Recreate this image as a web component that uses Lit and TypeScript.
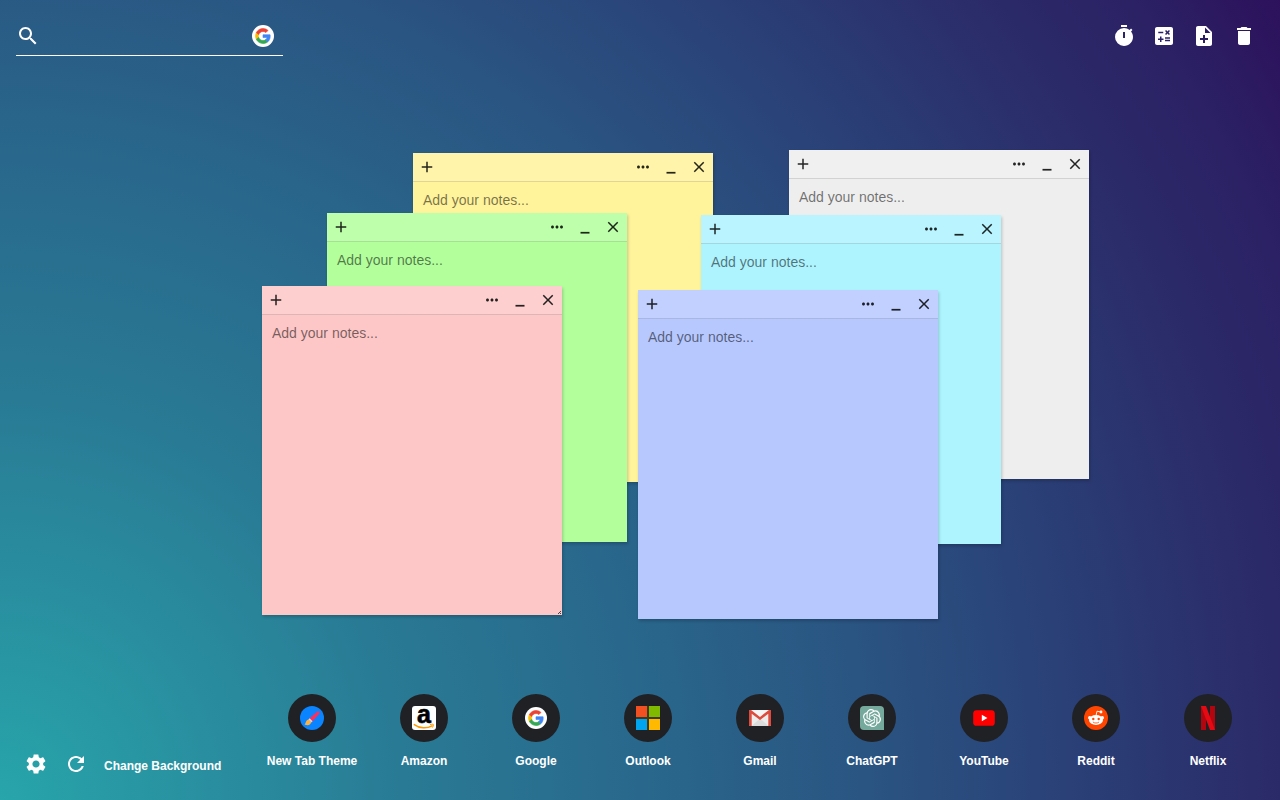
import { LitElement, html, svg, css } from "lit";
import { customElement, property } from "lit/decorators.js";

const glyph = (d: string, size = 24) =>
  html`<svg width=${size} height=${size} viewBox="0 0 24 24" fill="currentColor" aria-hidden="true"><path d=${d}></path></svg>`;

const P = {
  search:
    "M15.5 14h-.79l-.28-.27C15.41 12.59 16 11.11 16 9.5 16 5.91 13.09 3 9.5 3S3 5.91 3 9.5 5.91 16 9.5 16c1.61 0 3.09-.59 4.23-1.57l.27.28v.79l5 4.99L20.49 19l-4.99-5zm-6 0C7.01 14 5 11.99 5 9.5S7.01 5 9.5 5 14 7.01 14 9.5 11.99 14 9.5 14z",
  timer:
    "M15 1H9v2h6V1m4.03 6.39 1.42-1.42C20 5.46 19.55 5 19.04 4.56L17.62 6C16.07 4.74 14.12 4 12 4a9 9 0 0 0-9 9 9 9 0 0 0 9 9c5 0 9-4.03 9-9 0-2.12-.74-4.07-1.97-5.61M13 14h-2V8h2v6z",
  calculator:
    "M19 3H5c-1.1 0-2 .9-2 2v14c0 1.1.9 2 2 2h14c1.1 0 2-.9 2-2V5c0-1.1-.9-2-2-2zm-5.97 4.06L14.09 6l1.41 1.41L16.91 6l1.06 1.06-1.41 1.41 1.41 1.41-1.06 1.06-1.41-1.4-1.41 1.41-1.06-1.06 1.41-1.41-1.41-1.42zm-6.78.66h5v1.5h-5v-1.5zM11.5 16h-2v2H8v-2H6v-1.5h2v-2h1.5v2h2V16zm6.5 1.25h-5v-1.5h5v1.5zm0-2.5h-5v-1.5h5v1.5z",
  noteAdd:
    "M14 2H6c-1.1 0-1.99.9-1.99 2L4 20c0 1.1.89 2 1.99 2H18c1.1 0 2-.9 2-2V8l-6-6zm2 14h-3v3h-2v-3H8v-2h3v-3h2v3h3v2zm-3-7V3.5L18.5 9H13z",
  trash: "M6 19c0 1.1.9 2 2 2h8c1.1 0 2-.9 2-2V7H6v12zM19 4h-3.5l-1-1h-5l-1 1H5v2h14V4z",
  gear:
    "M19.14 12.94c.04-.3.06-.61.06-.94 0-.32-.02-.64-.07-.94l2.03-1.58c.18-.14.23-.41.12-.61l-1.92-3.32c-.12-.22-.37-.29-.59-.22l-2.39.96c-.5-.38-1.03-.7-1.62-.94l-.36-2.54c-.04-.24-.24-.41-.48-.41h-3.84c-.24 0-.43.17-.47.41l-.36 2.54c-.59.24-1.13.57-1.62.94l-2.39-.96c-.22-.08-.47 0-.59.22L2.74 8.87c-.12.21-.08.47.12.61l2.03 1.58c-.05.3-.09.63-.09.94s.02.64.07.94l-2.03 1.58c-.18.14-.23.41-.12.61l1.92 3.32c.12.22.37.29.59.22l2.39-.96c.5.38 1.03.7 1.62.94l.36 2.54c.05.24.24.41.48.41h3.84c.24 0 .44-.17.47-.41l.36-2.54c.59-.24 1.13-.56 1.62-.94l2.39.96c.22.08.47 0 .59-.22l1.92-3.32c.12-.22.07-.47-.12-.61l-2.01-1.58zM12 15.6c-1.98 0-3.6-1.62-3.6-3.6s1.62-3.6 3.6-3.6 3.6 1.62 3.6 3.6-1.62 3.6-3.6 3.6z",
  refresh:
    "M17.65 6.35C16.2 4.9 14.21 4 12 4c-4.42 0-7.99 3.58-7.99 8s3.57 8 7.99 8c3.73 0 6.84-2.55 7.73-6h-2.08c-.82 2.33-3.04 4-5.65 4-3.31 0-6-2.69-6-6s2.69-6 6-6c1.66 0 3.14.69 4.22 1.78L13 11h7V4l-2.35 2.35z",
  add: "M19 13h-6v6h-2v-6H5v-2h6V5h2v6h6v2z",
  more:
    "M6 10c-1.1 0-2 .9-2 2s.9 2 2 2 2-.9 2-2-.9-2-2-2zm12 0c-1.1 0-2 .9-2 2s.9 2 2 2 2-.9 2-2-.9-2-2-2zm-6 0c-1.1 0-2 .9-2 2s.9 2 2 2 2-.9 2-2-.9-2-2-2z",
  minimize: "M6 18.500h12v2.300H6z",
  close: "M19 6.41 17.59 5 12 10.59 6.41 5 5 6.41 10.59 12 5 17.59 6.41 19 12 13.41 17.59 19 19 17.59 13.41 12z",
  openai:
    "M22.2819 9.8211a5.9847 5.9847 0 0 0-.5157-4.9108 6.0462 6.0462 0 0 0-6.5098-2.9A6.0651 6.0651 0 0 0 4.9807 4.1818a5.9847 5.9847 0 0 0-3.9977 2.9 6.0462 6.0462 0 0 0 .7427 7.0966 5.98 5.98 0 0 0 .511 4.9107 6.051 6.051 0 0 0 6.5146 2.9001A5.9847 5.9847 0 0 0 13.2599 24a6.0557 6.0557 0 0 0 5.7718-4.2058 5.9894 5.9894 0 0 0 3.9977-2.9001 6.0557 6.0557 0 0 0-.7475-7.073zm-9.022 12.6081a4.4755 4.4755 0 0 1-2.8764-1.0408l.1419-.0804 4.7783-2.7582a.7948.7948 0 0 0 .3927-.6813v-6.7369l2.02 1.1686a.071.071 0 0 1 .038.052v5.5826a4.504 4.504 0 0 1-4.4945 4.4944zm-9.6607-4.1254a4.4708 4.4708 0 0 1-.5346-3.0137l.142.0852 4.783 2.7582a.7712.7712 0 0 0 .7806 0l5.8428-3.3685v2.3324a.0804.0804 0 0 1-.0332.0615L9.74 19.9502a4.4992 4.4992 0 0 1-6.1408-1.6464zM2.3408 7.8956a4.485 4.485 0 0 1 2.3655-1.9728V11.6a.7664.7664 0 0 0 .3879.6765l5.8144 3.3543-2.0201 1.1685a.0757.0757 0 0 1-.071 0l-4.8303-2.7865A4.504 4.504 0 0 1 2.3408 7.872zm16.5963 3.8558L13.1038 8.364 15.1192 7.2a.0757.0757 0 0 1 .071 0l4.8303 2.7913a4.4944 4.4944 0 0 1-.6765 8.1042v-5.6772a.79.79 0 0 0-.407-.667zm2.0107-3.0231l-.142-.0852-4.7735-2.7818a.7759.7759 0 0 0-.7854 0L9.409 9.2297V6.8974a.0662.0662 0 0 1 .0284-.0615l4.8303-2.7866a4.4992 4.4992 0 0 1 6.6802 4.66zM8.3065 12.863l-2.02-1.1638a.0804.0804 0 0 1-.038-.0567V6.0742a4.4992 4.4992 0 0 1 7.3757-3.4537l-.142.0805L8.704 5.459a.7948.7948 0 0 0-.3927.6813zm1.0976-2.3654l2.602-1.4998 2.6069 1.4998v2.9994l-2.5974 1.4997-2.6067-1.4997Z",
};

const logo = (body: unknown) =>
  html`<svg width="24" height="24" viewBox="0 0 24 24" overflow="visible" aria-hidden="true">${body}</svg>`;

const googleLogo = logo(svg`
  <circle cx="12" cy="12" r="11" fill="#fff"></circle>
  <g transform="translate(4.5 4.5) scale(.3125)" stroke-width="2">
    <path fill="#fbbc05" stroke="#fbbc05" d="M10.53 28.59c-.48-1.45-.76-2.99-.76-4.59s.27-3.14.76-4.59l-7.98-6.19C.92 16.46 0 20.12 0 24c0 3.88.92 7.54 2.56 10.78l7.97-6.19z"></path>
    <path fill="#ea4335" stroke="#ea4335" d="M24 9.5c3.54 0 6.71 1.22 9.21 3.6l6.85-6.85C35.9 2.38 30.47 0 24 0 14.62 0 6.51 5.38 2.56 13.22l7.98 6.19C12.43 13.72 17.74 9.5 24 9.5z"></path>
    <path fill="#34a853" stroke="#34a853" d="M24 48c6.48 0 11.93-2.13 15.89-5.81l-7.73-6c-2.15 1.45-4.92 2.3-8.16 2.3-6.26 0-11.57-4.22-13.47-9.91l-7.98 6.19C6.51 42.62 14.62 48 24 48z"></path>
    <path fill="#4285f4" stroke="#4285f4" d="M46.98 24.55c0-1.57-.15-3.09-.38-4.55H24v9.02h12.94c-.58 2.96-2.26 5.48-4.78 7.18l7.73 6c4.51-4.18 7.09-10.36 7.09-17.65z"></path>
  </g>`);

const shortcuts = [
  {
    name: "New Tab Theme",
    icon: logo(svg`
      <circle cx="12" cy="12" r="12" fill="#0a84ff"></circle>
      <path d="M9.600 12.200 17.200 5.700c1.700-1.100 3.100.4 2 2L12.600 15.200z" fill="#ff2f5b"></path>
      <path d="M9.600 12.200l3 3-1.500 1.300-2.800-2.800z" fill="#e3d5d8"></path>
      <path d="M8.400 13.500 11.200 16.300C10.500 19.300 7.600 20 4.500 18.500c1.600-.8.800-4.300 3.900-5z" fill="#ffb13d"></path>`),
  },
  {
    name: "Amazon",
    icon: logo(svg`
      <rect width="24" height="24" rx="3" fill="#fff"></rect>
      <text x="12" y="17" text-anchor="middle" font-family="Liberation Sans, Arial, sans-serif" font-weight="700" font-size="25" fill="#000" stroke="#000" stroke-width=".6">a</text>
      <path d="M2.300 18.600C7.500 22.600 15 22.800 20 19.800" fill="none" stroke="#f90" stroke-width="1.500" stroke-linecap="round"></path>
      <path d="M18 18.600c1.400-.5 2.800-.5 3.300-.2.300.8-.2 2.200-1 3.200" fill="none" stroke="#f90" stroke-width="1"></path>`),
  },
  { name: "Google", icon: googleLogo },
  {
    name: "Outlook",
    icon: logo(svg`
      <path fill="#5a4a12" d="M0 11h24v2H0zM11 0h2v24h-2z" opacity=".6"></path>
      <path fill="#f25022" d="M0 0h11v11H0z"></path><path fill="#7fba00" d="M13 0h11v11H13z"></path>
      <path fill="#00a4ef" d="M0 13h11v11H0z"></path><path fill="#ffb900" d="M13 13h11v11H13z"></path>`),
  },
  {
    name: "Gmail",
    icon: logo(svg`
      <rect x="1" y="4" width="22" height="16" rx="1.500" fill="#ececec"></rect>
      <path d="M3.500 20 12 12.500 20.500 20z" fill="#dcdcdc"></path>
      <path d="M2.500 4.500h19L12 12z" fill="#f5f5f5"></path>
      <path d="M2.300 20H3.700V7.800L12 14l8.300-6.200V20h1.400c.8 0 1.300-.5 1.300-1.300V5.300C23 3.900 21.500 3.600 20.600 4.300L12 10.900 3.400 4.300C2.500 3.600 1 3.900 1 5.300v13.400c0 .8.5 1.300 1.300 1.300z" fill="#dd4b3e"></path>`),
  },
  {
    name: "ChatGPT",
    icon: logo(svg`
      <path d="M4 0h16a4 4 0 0 1 4 4v20H4a4 4 0 0 1-4-4V4a4 4 0 0 1 4-4z" fill="#75a99c"></path>
      <g transform="translate(3 3) scale(.75)"><path fill="#fff" d=${P.openai}></path></g>`),
  },
  {
    name: "YouTube",
    icon: logo(svg`
      <rect x="1.200" y="4.200" width="21.600" height="15.600" rx="3.400" fill="#f00"></rect>
      <path d="M9.800 8.800v6.400L15.400 12z" fill="#fff"></path>`),
  },
  {
    name: "Reddit",
    icon: logo(svg`
      <circle cx="12" cy="12" r="12" fill="#ff4500"></circle>
      <g fill="#fff">
        <ellipse cx="12" cy="14" rx="7" ry="5"></ellipse>
        <circle cx="5.700" cy="11.800" r="1.700"></circle><circle cx="18.300" cy="11.800" r="1.700"></circle>
        <circle cx="17" cy="6" r="1.400"></circle>
        <path d="M12 9.600 13 5.200l3.800.8" fill="none" stroke="#fff" stroke-width=".9" stroke-linejoin="round"></path>
      </g>
      <circle cx="9.300" cy="13" r="1.200" fill="#ff4500"></circle><circle cx="14.700" cy="13" r="1.200" fill="#ff4500"></circle>
      <path d="M9.200 16.200c1.500 1.200 4.100 1.200 5.600 0" fill="none" stroke="#ff4500" stroke-width=".8" stroke-linecap="round"></path>`),
  },
  {
    name: "Netflix",
    icon: logo(svg`
      <path d="M5 0h5v24H5zM14 0h5v24h-5z" fill="#b1060f"></path>
      <path d="M5 0h5l9 24h-5z" fill="#e50914"></path>`),
  },
];

@customElement("sticky-note")
class StickyNote extends LitElement {
  @property() color = "";
  @property({ type: Boolean }) resizable = false;

  static styles = css`
    :host {
      display: block;
      width: 300px;
      box-shadow: 1px 2px 3px rgba(0, 0, 0, 0.2);
    }
    .note {
      display: flex;
      flex-direction: column;
      position: relative;
    }
    .yellow { background: #fff39b; }
    .gray { background: #eeeeee; }
    .green { background: #b2ff9c; }
    .cyan { background: #aef4ff; }
    .pink { background: #fdc7c7; }
    .blue { background: #b7c8ff; }
    .bar {
      display: flex;
      background: rgba(255, 255, 255, 0.15);
      border-bottom: 1px solid rgba(0, 0, 0, 0.12);
    }
    .bar button {
      display: grid;
      place-items: center;
      width: 28px;
      height: 28px;
      padding: 0;
      border: 0;
      background: none;
      color: rgba(0, 0, 0, 0.85);
    }
    .bar .add {
      margin-right: auto;
    }
    textarea {
      box-sizing: border-box;
      height: 300px;
      padding: 10px;
      border: 0;
      outline: 0;
      resize: none;
      background: none;
      font: 14px/16px "Liberation Sans", Arial, sans-serif;
      color: #222;
    }
    textarea::placeholder {
      color: rgba(0, 0, 0, 0.54);
    }
    .grip {
      position: absolute;
      right: 1px;
      bottom: 1px;
    }
  `;

  render() {
    return html`<section class="note ${this.color}">
      <div class="bar">
        <button class="add" aria-label="Add note">${glyph(P.add, 18)}</button>
        <button aria-label="More options">${glyph(P.more, 18)}</button>
        <button aria-label="Minimize">${glyph(P.minimize, 18)}</button>
        <button aria-label="Close">${glyph(P.close, 18)}</button>
      </div>
      <textarea aria-label="Note" placeholder="Add your notes..."></textarea>
      ${this.resizable
        ? html`<svg class="grip" width="3" height="3" viewBox="0 0 3 3" aria-hidden="true">
            <path d="M2 0h1v1H2zM1 1h1v1H1zM0 2h1v1H0zM2 2h1v1H2z" fill="#444"></path>
          </svg>`
        : ""}
    </section>`;
  }
}

const notes = [
  { color: "yellow", x: 413, y: 153 },
  { color: "gray", x: 789, y: 150 },
  { color: "green", x: 327, y: 213 },
  { color: "cyan", x: 701, y: 215 },
  { color: "blue", x: 638, y: 290 },
  { color: "pink", x: 262, y: 286 },
];

@customElement("app-root")
class AppRoot extends LitElement {
  static styles = css`
    :host {
      display: flex;
      flex-direction: column;
      justify-content: space-between;
      position: relative;
      box-sizing: border-box;
      min-height: 100vh;
      color: #fff;
      font: bold 12px/16px "Liberation Sans", Arial, sans-serif;
      background: radial-gradient(
        circle farthest-corner at 0 100%,
        #27a5aa 0%,
        #298d9f 15%,
        #297a94 27%,
        #29668b 44%,
        #2a5582 57%,
        #2a4077 71%,
        #2b2b69 84%,
        #2b2164 92%,
        #2d115c 100%
      );
    }
    header,
    footer {
      display: flex;
      justify-content: space-between;
      padding: 16px;
    }
    .search {
      display: flex;
      align-items: center;
      gap: 8px;
      box-sizing: border-box;
      width: 267px;
      height: 40px;
      padding-right: 8px;
      border-bottom: 1px solid #fff;
    }
    .search label,
    .engine {
      display: flex;
    }
    .search input {
      flex: 1;
      min-width: 0;
      padding: 0;
      border: 0;
      outline: 0;
      background: none;
      color: #fff;
      font: 16px "Liberation Sans", Arial, sans-serif;
    }
    button {
      padding: 0;
      border: 0;
      background: none;
      color: inherit;
      font: inherit;
    }
    .tools {
      display: flex;
    }
    .tool {
      display: grid;
      place-items: center;
      width: 40px;
      height: 40px;
    }
    .note {
      position: absolute;
    }
    footer {
      align-items: flex-end;
    }
    .tools .change {
      padding: 4px 8px 0;
    }
    .shortcuts {
      display: flex;
    }
    .shortcut {
      display: flex;
      flex-direction: column;
      align-items: center;
      gap: 11px;
      width: 112px;
      padding-bottom: 15px;
      color: inherit;
      text-decoration: none;
    }
    .disc {
      display: grid;
      place-items: center;
      width: 48px;
      height: 48px;
      border-radius: 50%;
      background: #202124;
    }
  `;

  render() {
    return html`
      <header>
        <form class="search" role="search">
          <label for="q" aria-label="Search">${glyph(P.search)}</label>
          <input id="q" type="text" autocomplete="off" />
          <button class="engine" type="button" aria-label="Search engine">${googleLogo}</button>
        </form>
        <nav class="tools">
          <button class="tool" aria-label="Timer">${glyph(P.timer)}</button>
          <button class="tool" aria-label="Calculator">${glyph(P.calculator)}</button>
          <button class="tool" aria-label="Add note">${glyph(P.noteAdd)}</button>
          <button class="tool" aria-label="Delete">${glyph(P.trash)}</button>
        </nav>
      </header>
      ${notes.map(
        (n) => html`<sticky-note
          class="note"
          style="left:${n.x}px;top:${n.y}px"
          color=${n.color}
          ?resizable=${n.color === "pink"}
        ></sticky-note>`,
      )}
      <footer>
        <div class="tools">
          <button class="tool" aria-label="Settings">${glyph(P.gear)}</button>
          <button class="tool" aria-label="Refresh">${glyph(P.refresh)}</button>
          <button class="change">Change Background</button>
        </div>
        <nav class="shortcuts">
          ${shortcuts.map(
            (s) => html`<a class="shortcut" href="#"><span class="disc">${s.icon}</span><span>${s.name}</span></a>`,
          )}
        </nav>
      </footer>
    `;
  }
}
